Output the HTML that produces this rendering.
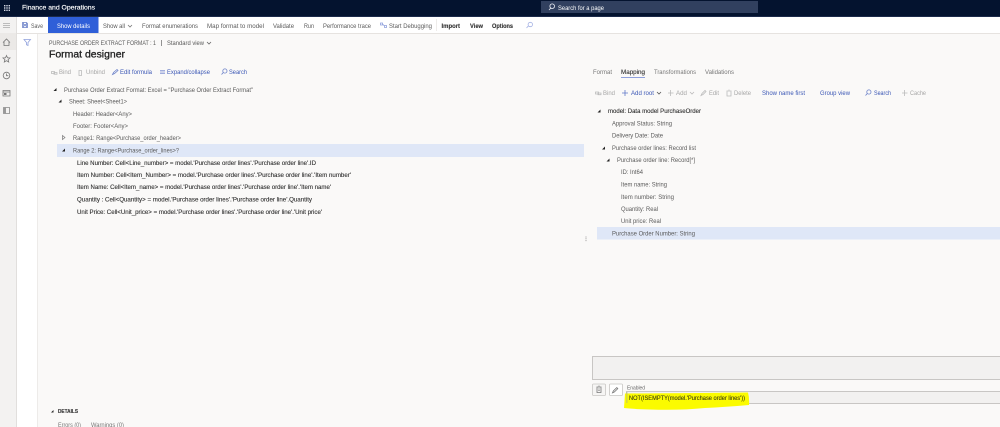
<!DOCTYPE html>
<html><head><meta charset="utf-8"><style>
html,body{margin:0;padding:0;width:1000px;height:427px;overflow:hidden;background:#faf9f8}
svg{display:block;filter:blur(.3px)}
text{font-family:"Liberation Sans",sans-serif;font-size:6px;fill:#5a5a5a;dominant-baseline:auto}
.d{fill:#333;stroke:#333;stroke-width:.12}.b{fill:#3b57b5}.l{fill:#a6a6a6}.w{fill:#fff}.s{font-weight:bold}
.ic{fill:none;stroke-width:.8}
</style></head><body>
<svg width="1000" height="427" viewBox="0 0 1000 427" xmlns="http://www.w3.org/2000/svg">
<rect width="1000" height="427" fill="#faf9f8"/>
<rect width="1000" height="16" fill="#04132f"/>
<rect y="16" width="1000" height="1" fill="#1c2a4a"/>
<rect y="17" width="1000" height="16" fill="#fff"/>
<rect y="33" width="1000" height="1" fill="#e6e3e0"/>
<rect y="17" width="17" height="410" fill="#f3f2f1"/>
<rect x="0" y="33" width="17" height="17" fill="#ebe9e7"/>
<rect x="16" y="17" width="1" height="410" fill="#e1dfdd"/>
<rect x="17" y="34" width="20" height="393" fill="#fff"/>
<rect x="37" y="34" width="1" height="393" fill="#edebe9"/>

<!-- waffle -->
<g fill="#d5d9e4"><rect x="4" y="5" width="1.4" height="1.4"/><rect x="6.3" y="5" width="1.4" height="1.4"/><rect x="8.6" y="5" width="1.4" height="1.4"/><rect x="4" y="7.3" width="1.4" height="1.4"/><rect x="6.3" y="7.3" width="1.4" height="1.4"/><rect x="8.6" y="7.3" width="1.4" height="1.4"/><rect x="4" y="9.6" width="1.4" height="1.4"/><rect x="6.3" y="9.6" width="1.4" height="1.4"/><rect x="8.6" y="9.6" width="1.4" height="1.4"/></g>
<text x="22" y="9.7" class="w s" textLength="73" lengthAdjust="spacingAndGlyphs" style="font-size:6.6px;font-weight:normal;stroke:#fff;stroke-width:.15">Finance and Operations</text>
<rect x="541" y="1" width="217" height="12" fill="#31405f"/>
<path class="ic" stroke="#e8ebf2" d="M549 10l2-2.200M554.500 6.200a2.300 2.300 0 1 1-4.600 0a2.300 2.300 0 1 1 4.600 0z"/>
<text x="558" y="9.800" class="w" textLength="46" lengthAdjust="spacingAndGlyphs">Search for a page</text>

<!-- command bar -->
<path stroke="#aaa" stroke-width=".8" d="M3 23.500h7M3 25.500h7M3 27.500h7"/>
<path class="ic" stroke="#6d83c9" d="M22.500 22.500h4l1 1v4h-5zM23.500 22.500v2h3v-2M23.500 27.500v-1.800h3v1.800"/>
<text x="31" y="28" textLength="12" lengthAdjust="spacingAndGlyphs">Save</text>
<rect x="48" y="17" width="50.500" height="16" fill="#2f5fd8"/>
<text x="57" y="28" class="w" textLength="33" lengthAdjust="spacingAndGlyphs">Show details</text>
<text x="103" y="28" textLength="22" lengthAdjust="spacingAndGlyphs">Show all</text>
<path class="ic" stroke="#777" d="M128 25l2 2 2-2"/>
<text x="142" y="28" textLength="56" lengthAdjust="spacingAndGlyphs">Format enumerations</text>
<text x="207" y="28" textLength="57" lengthAdjust="spacingAndGlyphs">Map format to model</text>
<text x="273" y="28" textLength="21" lengthAdjust="spacingAndGlyphs">Validate</text>
<text x="304" y="28" textLength="10" lengthAdjust="spacingAndGlyphs">Run</text>
<text x="323" y="28" textLength="48" lengthAdjust="spacingAndGlyphs">Performance trace</text>
<path class="ic" stroke="#8fa0dc" d="M380.500 23h2v2h-2zM384.500 25.500h2v2h-2zM382.500 24l2 2"/>
<text x="389" y="28" textLength="43" lengthAdjust="spacingAndGlyphs">Start Debugging</text>
<rect x="436" y="19" width="1" height="12" fill="#eeecea"/>
<text x="441.500" y="28" class="d s" textLength="18.500" lengthAdjust="spacingAndGlyphs">Import</text>
<text x="470" y="28" class="d s" textLength="13" lengthAdjust="spacingAndGlyphs">View</text>
<text x="492" y="28" class="d s" textLength="21" lengthAdjust="spacingAndGlyphs">Options</text>
<path class="ic" stroke="#a5b2e4" d="M526.500 28l2-2.200M532.500 24.500a2.200 2.200 0 1 1-4.400 0a2.200 2.200 0 1 1 4.400 0z"/>

<!-- nav icons -->
<path class="ic" stroke="#777" d="M3 42.500l3.500-3.500 3.500 3.500M4 41.800v3.700h5v-3.700"/>
<path class="ic" stroke="#777" d="M6.500 55.500l1 2.300 2.500.2-1.900 1.600.6 2.400-2.200-1.300-2.200 1.300.6-2.400-1.900-1.600 2.500-.2z"/>
<circle class="ic" stroke="#777" cx="6.500" cy="75.500" r="3.300"/><path class="ic" stroke="#777" d="M6.500 73.500v2.200h1.800"/>
<path class="ic" stroke="#777" d="M3 90.500h7v5.500h-7zM3 92h7"/><rect x="4" y="93" width="2.500" height="2" fill="#777"/>
<path class="ic" stroke="#888" d="M3.500 107.500h6v6h-6zM5.500 107.500v6"/><rect x="3.500" y="107.500" width="2" height="6" fill="#999"/>
<path class="ic" stroke="#8fa0dc" d="M24 39.500h6.500l-2.500 3v3l-1.500-.8v-2.200z"/>

<!-- header -->
<text x="49" y="45" textLength="107" lengthAdjust="spacingAndGlyphs">PURCHASE ORDER EXTRACT FORMAT : 1</text>
<rect x="161" y="40" width=".7" height="6" fill="#666"/>
<text x="167" y="45" textLength="37" lengthAdjust="spacingAndGlyphs">Standard view</text>
<path class="ic" stroke="#666" d="M207 42l2 2 2-2"/>
<text x="49" y="57.500" textLength="76" lengthAdjust="spacingAndGlyphs" style="font-size:10px;fill:#222;stroke:#222;stroke-width:.3">Format designer</text>

<!-- left toolbar -->
<path class="ic" stroke="#bbb" d="M51.500 71.500h3v2h-3zM54 72.500h3v1.700h-3z"/>
<text x="59" y="74" class="l" textLength="12" lengthAdjust="spacingAndGlyphs">Bind</text>
<path class="ic" stroke="#bbb" d="M78.500 70.500h3.500M79 71v4.500h2.500v-4.500"/>
<text x="86" y="74" class="l" textLength="19" lengthAdjust="spacingAndGlyphs">Unbind</text>
<path class="ic" stroke="#6d83c9" d="M112.500 74.500l1-2 3.500-3 1 1-3.500 3z"/>
<text x="120" y="74" class="b" textLength="32" lengthAdjust="spacingAndGlyphs">Edit formula</text>
<path class="ic" stroke="#8494d2" d="M160 70.500h5M160 72h5M160 73.500h5"/>
<text x="167" y="74" class="b" textLength="43" lengthAdjust="spacingAndGlyphs">Expand/collapse</text>
<path class="ic" stroke="#6d83c9" d="M221.500 74.500l2-2.200M227 71a2.100 2.100 0 1 1-4.200 0a2.100 2.100 0 1 1 4.200 0z"/>
<text x="229" y="74" class="b" textLength="18" lengthAdjust="spacingAndGlyphs">Search</text>

<!-- left tree -->
<rect x="57" y="144" width="527" height="13" fill="#dfe7f7"/>
<g fill="#222">
<path d="M53.500 91l3-3v3z"/><path d="M58.500 102.500l3-3v3z"/><path d="M62 151.500l3-3v3z"/>
</g>
<path d="M62.500 135.500l2.500 2-2.500 2z" fill="none" stroke="#777" stroke-width=".7"/>
<text x="64" y="92" textLength="189" lengthAdjust="spacingAndGlyphs">Purchase Order Extract Format: Excel = "Purchase Order Extract Format"</text>
<text x="69" y="103.500" textLength="58" lengthAdjust="spacingAndGlyphs">Sheet: Sheet&lt;Sheet1&gt;</text>
<text x="73" y="116" textLength="59" lengthAdjust="spacingAndGlyphs">Header: Header&lt;Any&gt;</text>
<text x="73" y="128" textLength="55" lengthAdjust="spacingAndGlyphs">Footer: Footer&lt;Any&gt;</text>
<text x="73" y="140" textLength="108" lengthAdjust="spacingAndGlyphs">Range1: Range&lt;Purchase_order_header&gt;</text>
<text x="73" y="152.500" textLength="106" lengthAdjust="spacingAndGlyphs">Range 2: Range&lt;Purchase_order_lines&gt;?</text>
<text x="77" y="165" class="d" textLength="239" lengthAdjust="spacingAndGlyphs">Line Number: Cell&lt;Line_number&gt; = model.'Purchase order lines'.'Purchase order line'.ID</text>
<text x="77" y="177" class="d" textLength="274" lengthAdjust="spacingAndGlyphs">Item Number: Cell&lt;Item_Number&gt; = model.'Purchase order lines'.'Purchase order line'.'Item number'</text>
<text x="77" y="189" class="d" textLength="254" lengthAdjust="spacingAndGlyphs">Item Name: Cell&lt;Item_name&gt; = model.'Purchase order lines'.'Purchase order line'.'Item name'</text>
<text x="77" y="201.500" class="d" textLength="235" lengthAdjust="spacingAndGlyphs">Quantity : Cell&lt;Quantity&gt; = model.'Purchase order lines'.'Purchase order line'.Quantity</text>
<text x="77" y="214" class="d" textLength="245" lengthAdjust="spacingAndGlyphs">Unit Price: Cell&lt;Unit_price&gt; = model.'Purchase order lines'.'Purchase order line'.'Unit price'</text>

<!-- tabs -->
<text x="593" y="74" style="fill:#777" textLength="19" lengthAdjust="spacingAndGlyphs">Format</text>
<text x="621" y="74" class="d" textLength="24" lengthAdjust="spacingAndGlyphs">Mapping</text>
<rect x="621" y="77" width="24" height="1" fill="#8fa0dc"/>
<text x="654" y="74" style="fill:#777" textLength="42" lengthAdjust="spacingAndGlyphs">Transformations</text>
<text x="705" y="74" style="fill:#777" textLength="29" lengthAdjust="spacingAndGlyphs">Validations</text>

<!-- right toolbar -->
<path class="ic" stroke="#bbb" d="M595.500 92h3v2h-3zM598 93h3v1.700h-3z"/>
<text x="603" y="95" class="l" textLength="12" lengthAdjust="spacingAndGlyphs">Bind</text>
<path class="ic" stroke="#5f78c8" d="M625 90v6M622 93h6"/>
<text x="631" y="95" class="b" textLength="23" lengthAdjust="spacingAndGlyphs">Add root</text>
<path class="ic" stroke="#555" d="M657 92l2 2 2-2"/>
<path class="ic" stroke="#bbb" d="M670.500 90v6M668 93h5.500"/>
<text x="676" y="95" class="l" textLength="11" lengthAdjust="spacingAndGlyphs">Add</text>
<path class="ic" stroke="#bbb" d="M690 92l2 2 2-2"/>
<path class="ic" stroke="#bbb" d="M701 95.500l1-2 3-3 1 1-3 3z"/>
<text x="709" y="95" class="l" textLength="10" lengthAdjust="spacingAndGlyphs">Edit</text>
<path class="ic" stroke="#bbb" d="M726.500 91h5M727 91.500v4.500h4v-4.500M728.500 90h1"/>
<text x="734" y="95" class="l" textLength="17" lengthAdjust="spacingAndGlyphs">Delete</text>
<text x="762" y="95" class="b" textLength="43" lengthAdjust="spacingAndGlyphs">Show name first</text>
<text x="820" y="95" class="b" textLength="30" lengthAdjust="spacingAndGlyphs">Group view</text>
<path class="ic" stroke="#6d83c9" d="M865.500 95.500l2-2.200M871 92a2.100 2.100 0 1 1-4.200 0a2.100 2.100 0 1 1 4.200 0z"/>
<text x="874" y="95" class="b" textLength="17" lengthAdjust="spacingAndGlyphs">Search</text>
<path class="ic" stroke="#bbb" d="M904.500 90v6M902 93h5.500"/>
<text x="910" y="95" class="l" textLength="16" lengthAdjust="spacingAndGlyphs">Cache</text>

<!-- right tree -->
<rect x="597" y="227" width="403" height="12.500" fill="#dfe7f7"/>
<g fill="#222"><path d="M597.500 112.500l3-3v3z"/><path d="M602 149.500l3-3v3z"/><path d="M606.500 161.500l3-3v3z"/></g>
<text x="608" y="113" class="d" textLength="93" lengthAdjust="spacingAndGlyphs">model: Data model PurchaseOrder</text>
<text x="612" y="125.500" textLength="60" lengthAdjust="spacingAndGlyphs">Approval Status: String</text>
<text x="612" y="137.500" textLength="51" lengthAdjust="spacingAndGlyphs">Delivery Date: Date</text>
<text x="612" y="150" textLength="84" lengthAdjust="spacingAndGlyphs">Purchase order lines: Record list</text>
<text x="617" y="162" textLength="78" lengthAdjust="spacingAndGlyphs">Purchase order line: Record[*]</text>
<text x="621" y="174" textLength="22" lengthAdjust="spacingAndGlyphs">ID: Int64</text>
<text x="621" y="186.500" textLength="46" lengthAdjust="spacingAndGlyphs">Item name: String</text>
<text x="621" y="199" textLength="53" lengthAdjust="spacingAndGlyphs">Item number: String</text>
<text x="621" y="211" textLength="37" lengthAdjust="spacingAndGlyphs">Quantity: Real</text>
<text x="621" y="223" textLength="40" lengthAdjust="spacingAndGlyphs">Unit price: Real</text>
<text x="612" y="235.500" textLength="83" lengthAdjust="spacingAndGlyphs">Purchase Order Number: String</text>
<path stroke="#888" stroke-width=".8" stroke-dasharray="1 .8" d="M586 236.500v5"/>

<!-- formula area -->
<rect x="592.500" y="356.500" width="410" height="23" fill="#f2f1f0" stroke="#c8c6c4"/>
<rect x="592.500" y="384" width="13" height="11.500" rx="1" fill="#f6f5f4" stroke="#c8c6c4" stroke-width=".8"/>
<path class="ic" stroke="#777" d="M596.500 387h5M597 387.500v5h4v-5M598.500 386h1M598.300 389h1.400M598.300 390.500h1.400"/>
<rect x="609.500" y="384" width="13" height="11.500" rx="1" fill="#fff" stroke="#c8c6c4" stroke-width=".8"/>
<path class="ic" stroke="#777" d="M612.500 392.800l.8-1.800 3.500-3.400 1 1-3.500 3.400z"/>
<text x="627" y="389.500" style="fill:#666;font-size:5.500px" textLength="18" lengthAdjust="spacingAndGlyphs">Enabled</text>
<rect x="626.500" y="391.500" width="376" height="12" fill="#f2f1f0" stroke="#c8c6c4"/>
<path d="M625 393.500L700 393L748 392.500Q749.500 398 749 405Q725 407 705 408Q680 410.500 650 409.500Q632 409 624 408Z" fill="#fbfb00"/>
<rect x="626.500" y="392" width=".8" height="11" fill="#b5b57a"/>
<text x="629" y="400" style="fill:#3a3a10;stroke:#3a3a10;stroke-width:.1" textLength="116" lengthAdjust="spacingAndGlyphs">NOT(ISEMPTY(model.'Purchase order lines'))</text>

<!-- details -->
<path d="M51 412.500l2.500-2.500v2.500z" fill="#222"/>
<text x="58" y="413" class="d s" textLength="20" lengthAdjust="spacingAndGlyphs" style="font-size:5px">DETAILS</text>
<text x="58" y="427" style="fill:#777" textLength="23" lengthAdjust="spacingAndGlyphs">Errors (0)</text>
<text x="91" y="427" style="fill:#777" textLength="33" lengthAdjust="spacingAndGlyphs">Warnings (0)</text>
</svg>
</body></html>
